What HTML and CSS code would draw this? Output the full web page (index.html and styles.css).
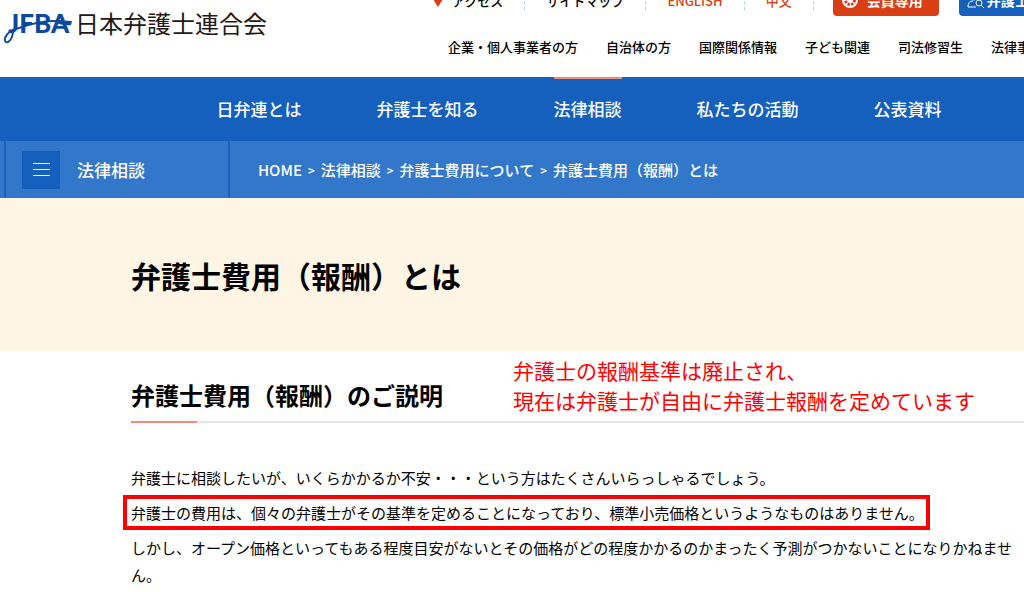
FILE: index.html
```html
<!DOCTYPE html>
<html lang="ja">
<head>
    <meta charset="UTF-8">
    <meta name="viewport" content="width=device-width, initial-scale=1.0">
    <title>弁護士費用（報酬）とは</title>
    <link rel="stylesheet" href="styles.css">
</head>
<body>
    <header class="header">
        <a class="logo" href="#">
            <svg class="logo-mark" viewBox="0 0 72 44" width="72" height="44" aria-hidden="true">
                <text class="logo-letters" x="8" y="33">JFBA</text>
                <path d="M13 32 Q12 40 8 42 Q4 43 5 38 Q7 31 22 27 Q40 21 53 21 Q62 21 71 23" fill="none" stroke="#0d4a9e" stroke-width="2"/>
                <path d="M55 20 L72 21 L71 25 Q64 26 56 23 Z" fill="#0d4a9e"/>
            </svg>
            <span class="logo-name">日本弁護士連合会</span>
        </a>
        <div class="header-nav">
            <ul class="utility">
                <li>
                    <a href="#">
                        <svg viewBox="0 0 12 18" width="12" height="18" aria-hidden="true"><path d="M6 16 L1 8 A5.5 5.5 0 1 1 11 8 Z" fill="#d93f14"/></svg>
                        アクセス
                    </a>
                </li>
                <li><a href="#">サイトマップ</a></li>
                <li><a class="accent" href="#">ENGLISH</a></li>
                <li><a class="accent" href="#">中文</a></li>
                <li class="buttons">
                    <a class="button member" href="#">
                        <svg viewBox="0 0 18 18" width="18" height="18" aria-hidden="true">
                            <circle cx="9" cy="9" r="8" fill="#fff"/>
                            <circle cx="9" cy="9" r="4.5" fill="none" stroke="#d93f14" stroke-width="3" stroke-dasharray="2.3 1.23"/>
                            <circle cx="9" cy="9" r="2" fill="#fff"/>
                        </svg>
                        会員専用
                    </a>
                    <a class="button search" href="#">
                        <svg viewBox="0 0 18 18" width="18" height="18" fill="none" stroke="#fff" aria-hidden="true">
                            <circle cx="7" cy="6" r="3"/><path d="M9 16H1Q1 10 6 10"/><circle cx="12" cy="12" r="3"/><path d="M14 14L17 17"/>
                        </svg>
                        弁護士検索
                    </a>
                </li>
            </ul>
            <ul class="audience">
                <li><a href="#">企業・個人事業者の方</a></li>
                <li><a href="#">自治体の方</a></li>
                <li><a href="#">国際関係情報</a></li>
                <li><a href="#">子ども関連</a></li>
                <li><a href="#">司法修習生</a></li>
                <li><a href="#">法律事務所</a></li>
            </ul>
        </div>
    </header>

    <nav class="main-nav">
        <a href="#">日弁連とは</a>
        <a href="#">弁護士を知る</a>
        <a class="current" href="#">法律相談</a>
        <a href="#">私たちの活動</a>
        <a href="#">公表資料</a>
    </nav>

    <div class="sub-bar">
        <div class="section-menu">
            <button class="menu-button" type="button" aria-label="メニュー"><span></span><span></span><span></span></button>
            <a href="#">法律相談</a>
        </div>
        <nav class="breadcrumb">
            <a href="#">HOME</a>
            <span>&gt;</span>
            <a href="#">法律相談</a>
            <span>&gt;</span>
            <a href="#">弁護士費用について</a>
            <span>&gt;</span>
            <a href="#">弁護士費用（報酬）とは</a>
        </nav>
    </div>

    <div class="page-title">
        <h1>弁護士費用（報酬）とは</h1>
    </div>

    <main class="content">
        <div class="heading">
            <h2>弁護士費用（報酬）のご説明</h2>
            <p class="note">弁護士の報酬基準は廃止され、<br>現在は弁護士が自由に弁護士報酬を定めています</p>
        </div>
        <div class="text">
            <p>弁護士に相談したいが、いくらかかるか不安・・・という方はたくさんいらっしゃるでしょう。</p>
            <p class="marked">弁護士の費用は、個々の弁護士がその基準を定めることになっており、標準小売価格というようなものはありません。</p>
            <p>しかし、オープン価格といってもある程度目安がないとその価格がどの程度かかるのかまったく予測がつかないことになりかねません。</p>
        </div>
    </main>
</body>
</html>
```
FILE: styles.css
```css
* {
    box-sizing: border-box;
}
body {
    margin: 0;
    font-family: "Noto Sans CJK JP", sans-serif;
    font-size: 15px;
    color: #000;
    background-color: #fff;
    overflow-x: hidden;
}
a {
    color: inherit;
    text-decoration: none;
    white-space: nowrap;
}
ul {
    list-style: none;
    margin: 0;
    padding: 0;
}
h1, h2, p {
    margin: 0;
}
.header {
    display: flex;
    height: 77px;
    overflow: hidden;
}
.logo {
    display: flex;
    align-items: center;
    height: 44px;
    gap: 3px;
    color: #231815;
}
.logo-letters {
    font-family: Lato, sans-serif;
    font-size: 26px;
    font-weight: 900;
    fill: #0d4a9e;
}
.logo-name {
    font-size: 24px;
}
.header-nav {
    flex: none;
    margin-left: 165px;
    font-size: 13px;
    font-weight: 500;
}
.utility {
    display: flex;
    align-items: center;
    height: 32px;
    margin-top: -16px;
}
.utility a {
    display: flex;
    align-items: center;
    gap: 8px;
}
.utility li {
    padding: 0 21px;
    border-right: 1px dashed #b8cfe8;
}
.utility li:first-child {
    padding-left: 0;
}
.utility li.buttons {
    display: flex;
    gap: 20px;
    padding-left: 19px;
    border: none;
}
.accent {
    color: #d93f14;
}
.utility .button {
    height: 32px;
    padding: 0 16px 0 8px;
    border-radius: 4px;
    font-size: 14px;
    font-weight: bold;
    color: #fff;
}
.utility .member {
    background-color: #d93f14;
}
.utility .search {
    gap: 2px;
    background-color: #1560bd;
}
.audience {
    display: flex;
    gap: 28px;
    padding: 21px 0 0 16px;
}
.main-nav {
    display: flex;
    justify-content: center;
    gap: 75px;
    padding-left: 134px;
    height: 64px;
    line-height: 64px;
    font-size: 17px;
    font-weight: 500;
    color: #fff;
    background-color: #1560bd;
}
.current {
    border-top: 2px solid #f08c7c;
    line-height: 60px;
}
.sub-bar {
    display: flex;
    height: 57px;
    padding-left: 4px;
    font-weight: 500;
    color: #fff;
    background-color: #3377cb;
}
.section-menu {
    display: flex;
    align-items: center;
    gap: 17px;
    width: 226px;
    padding-left: 16px;
    border-left: 2px solid #1b63be;
    border-right: 2px solid #1b63be;
    font-size: 17px;
}
.menu-button {
    display: flex;
    flex-direction: column;
    align-items: center;
    justify-content: center;
    gap: 5px;
    width: 38px;
    height: 38px;
    padding: 0;
    border: none;
    background-color: #1560bd;
}
.menu-button span {
    width: 17px;
    height: 1px;
    background-color: #fff;
}
.breadcrumb {
    display: flex;
    align-items: center;
    gap: 6px;
    padding-left: 28px;
}
.breadcrumb span {
    font-size: 12px;
}
.page-title {
    padding: 55px 131px 54px;
    background-color: #fff5e4;
}
.page-title h1 {
    font-size: 30px;
    line-height: 44px;
}
.content {
    padding-left: 131px;
}
.heading {
    display: flex;
    gap: 70px;
    height: 72px;
    border-bottom: 2px solid #e6e6e6;
    position: relative;
}
.heading::after {
    content: "";
    position: absolute;
    left: 0;
    bottom: -2px;
    width: 66px;
    height: 2px;
    background-color: #f08c7c;
}
.heading h2 {
    padding-top: 26px;
    font-size: 24px;
    line-height: 36px;
}
.note {
    padding-top: 4px;
    font-size: 21px;
    line-height: 30px;
    color: #f00;
}
.text {
    padding: 41px 0 0;
    line-height: 27px;
}
.text p {
    margin-bottom: 8px;
}
.text .marked {
    width: fit-content;
    margin: -4px 0 4px -8px;
    padding: 0 2px 0 4px;
    border: 4px solid #f00;
}
```
